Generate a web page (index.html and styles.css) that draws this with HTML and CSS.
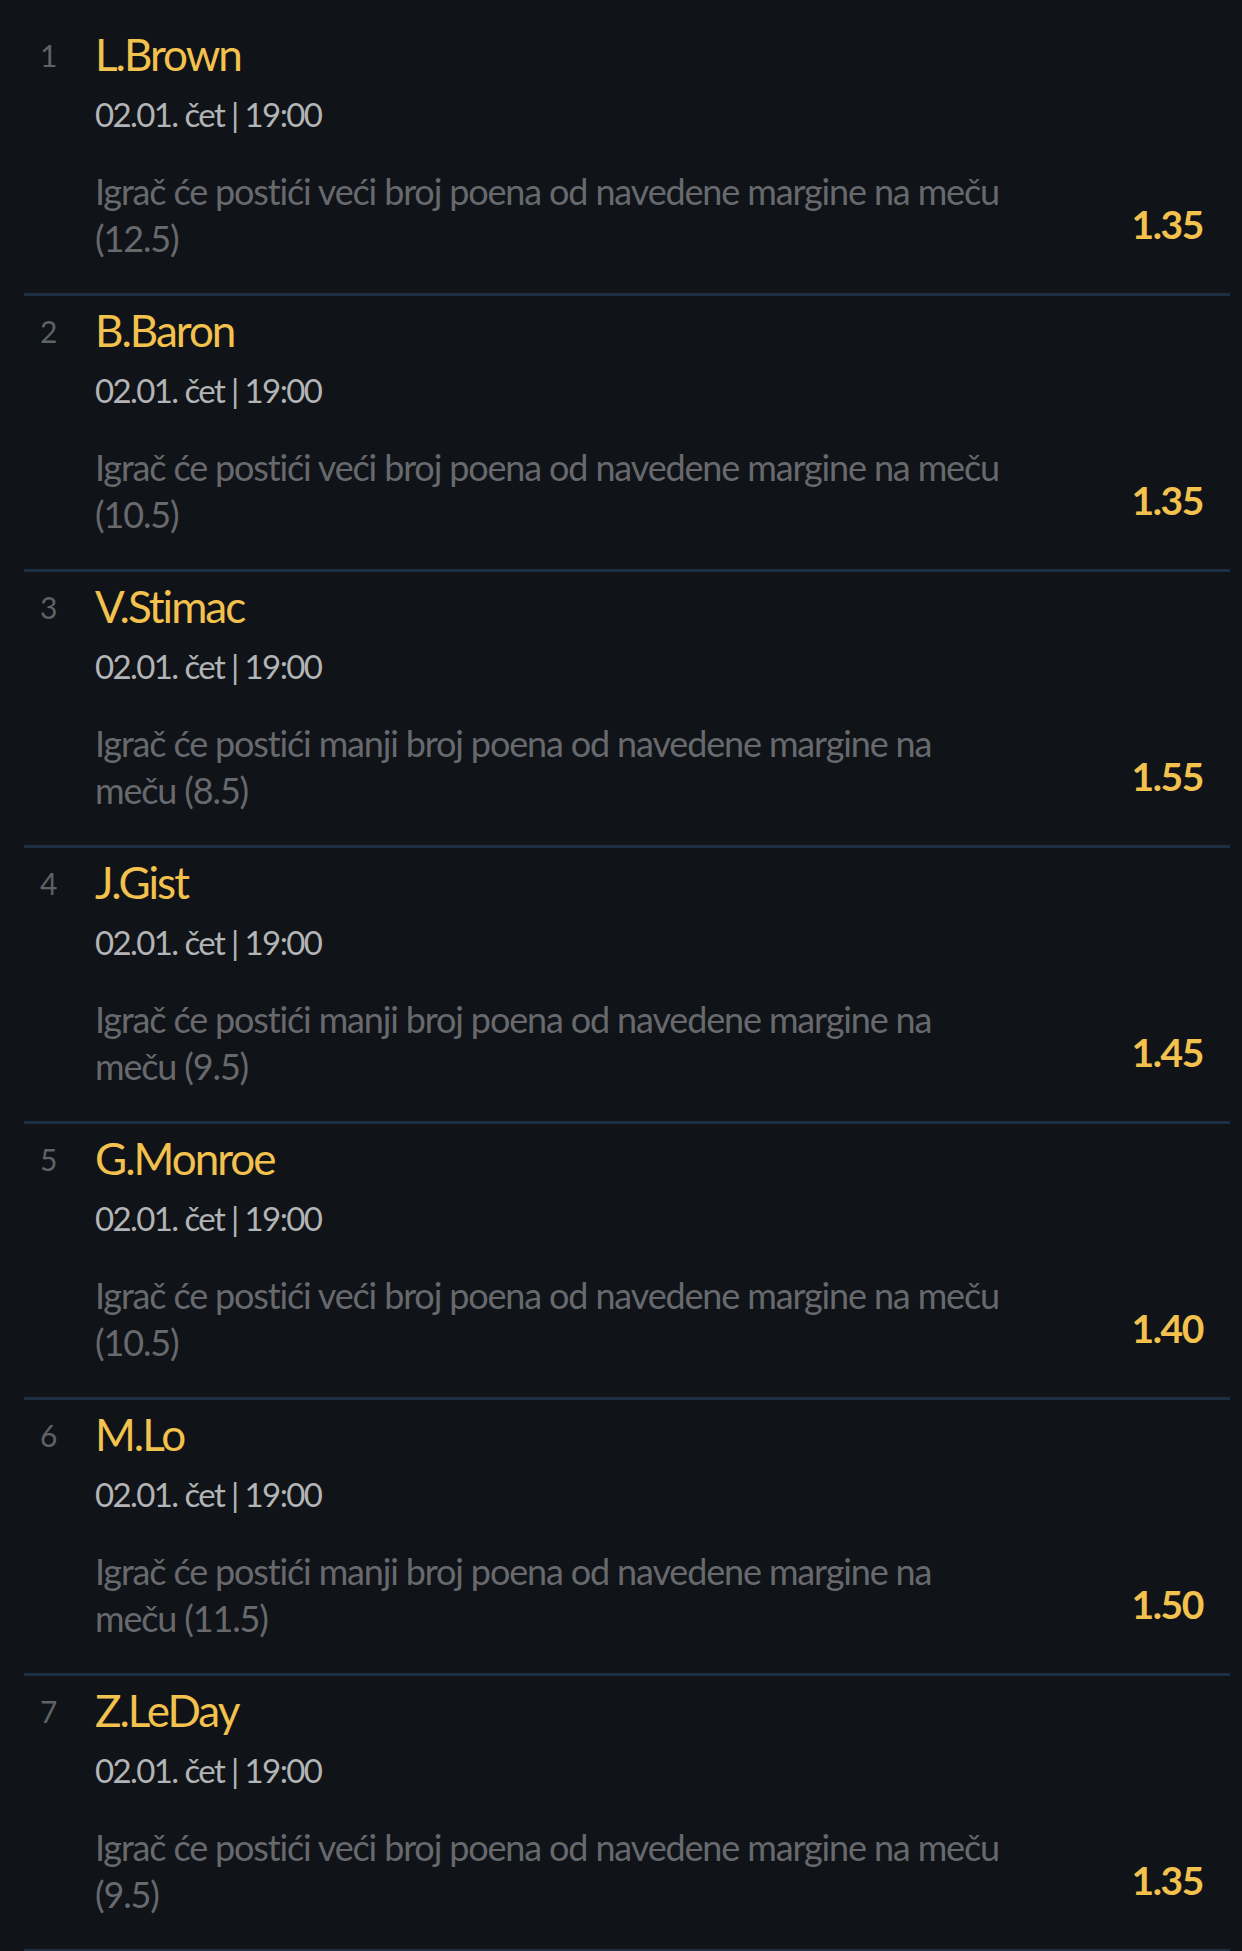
FILE: index.html
```html
<!DOCTYPE html>
<html lang="hr">
<head>
<meta charset="utf-8">
<title>Igrači</title>
<link rel="stylesheet" href="styles.css">
</head>
<body>
<main class="list">
  <section class="row">
    <div class="num">1</div>
    <div class="main">
      <div class="name">L.Brown</div>
      <div class="date">02.01. čet | 19:00</div>
      <div class="bet">
        <p class="desc">Igrač će postići veći broj poena od navedene margine na meču (12.5)</p>
        <div class="odds">1.35</div>
      </div>
    </div>
  </section>
  <section class="row">
    <div class="num">2</div>
    <div class="main">
      <div class="name">B.Baron</div>
      <div class="date">02.01. čet | 19:00</div>
      <div class="bet">
        <p class="desc">Igrač će postići veći broj poena od navedene margine na meču (10.5)</p>
        <div class="odds">1.35</div>
      </div>
    </div>
  </section>
  <section class="row">
    <div class="num">3</div>
    <div class="main">
      <div class="name">V.Stimac</div>
      <div class="date">02.01. čet | 19:00</div>
      <div class="bet">
        <p class="desc">Igrač će postići manji broj poena od navedene margine na meču (8.5)</p>
        <div class="odds">1.55</div>
      </div>
    </div>
  </section>
  <section class="row">
    <div class="num">4</div>
    <div class="main">
      <div class="name">J.Gist</div>
      <div class="date">02.01. čet | 19:00</div>
      <div class="bet">
        <p class="desc">Igrač će postići manji broj poena od navedene margine na meču (9.5)</p>
        <div class="odds">1.45</div>
      </div>
    </div>
  </section>
  <section class="row">
    <div class="num">5</div>
    <div class="main">
      <div class="name">G.Monroe</div>
      <div class="date">02.01. čet | 19:00</div>
      <div class="bet">
        <p class="desc">Igrač će postići veći broj poena od navedene margine na meču (10.5)</p>
        <div class="odds">1.40</div>
      </div>
    </div>
  </section>
  <section class="row">
    <div class="num">6</div>
    <div class="main">
      <div class="name">M.Lo</div>
      <div class="date">02.01. čet | 19:00</div>
      <div class="bet">
        <p class="desc">Igrač će postići manji broj poena od navedene margine na meču (11.5)</p>
        <div class="odds">1.50</div>
      </div>
    </div>
  </section>
  <section class="row">
    <div class="num">7</div>
    <div class="main">
      <div class="name">Z.LeDay</div>
      <div class="date">02.01. čet | 19:00</div>
      <div class="bet">
        <p class="desc">Igrač će postići veći broj poena od navedene margine na meču (9.5)</p>
        <div class="odds">1.35</div>
      </div>
    </div>
  </section>
</main>
</body>
</html>
```

FILE: styles.css
```css
html, body {
  margin: 0;
  padding: 0;
  background: #101318;
}

body {
  font-family: Lato, "Noto Sans", "Liberation Sans", sans-serif;
  -webkit-font-smoothing: antialiased;
}

.list {
  padding: 20px 12px 0 24px;
}

.row {
  display: flex;
  height: 273px;
  border-bottom: 3px solid #1d2f44;
  padding: 0 27px 0 16px;
}

.num {
  width: 55px;
  flex: none;
  margin-top: 20px;
  font-size: 30px;
  line-height: 30px;
  color: #5f6267;
}

.main {
  flex: 1;
  min-width: 0;
  padding-top: 12px;
}

.name {
  font-size: 44px;
  line-height: 44px;
  letter-spacing: -2px;
  color: #f2c14e;
}

.date {
  margin-top: 22px;
  font-size: 33px;
  line-height: 33px;
  letter-spacing: -1.6px;
  color: #b2b4b6;
}

.bet {
  display: flex;
  align-items: center;
  justify-content: space-between;
  margin-top: 37px;
}

.desc {
  flex: none;
  margin: 0;
  width: 912px;
  font-size: 36px;
  line-height: 47px;
  letter-spacing: -1.15px;
  color: #67696d;
}

.odds {
  margin-top: 19px;
  font-size: 39px;
  line-height: 39px;
  font-weight: 700;
  letter-spacing: -1.4px;
  color: #f2c14e;
}
```
